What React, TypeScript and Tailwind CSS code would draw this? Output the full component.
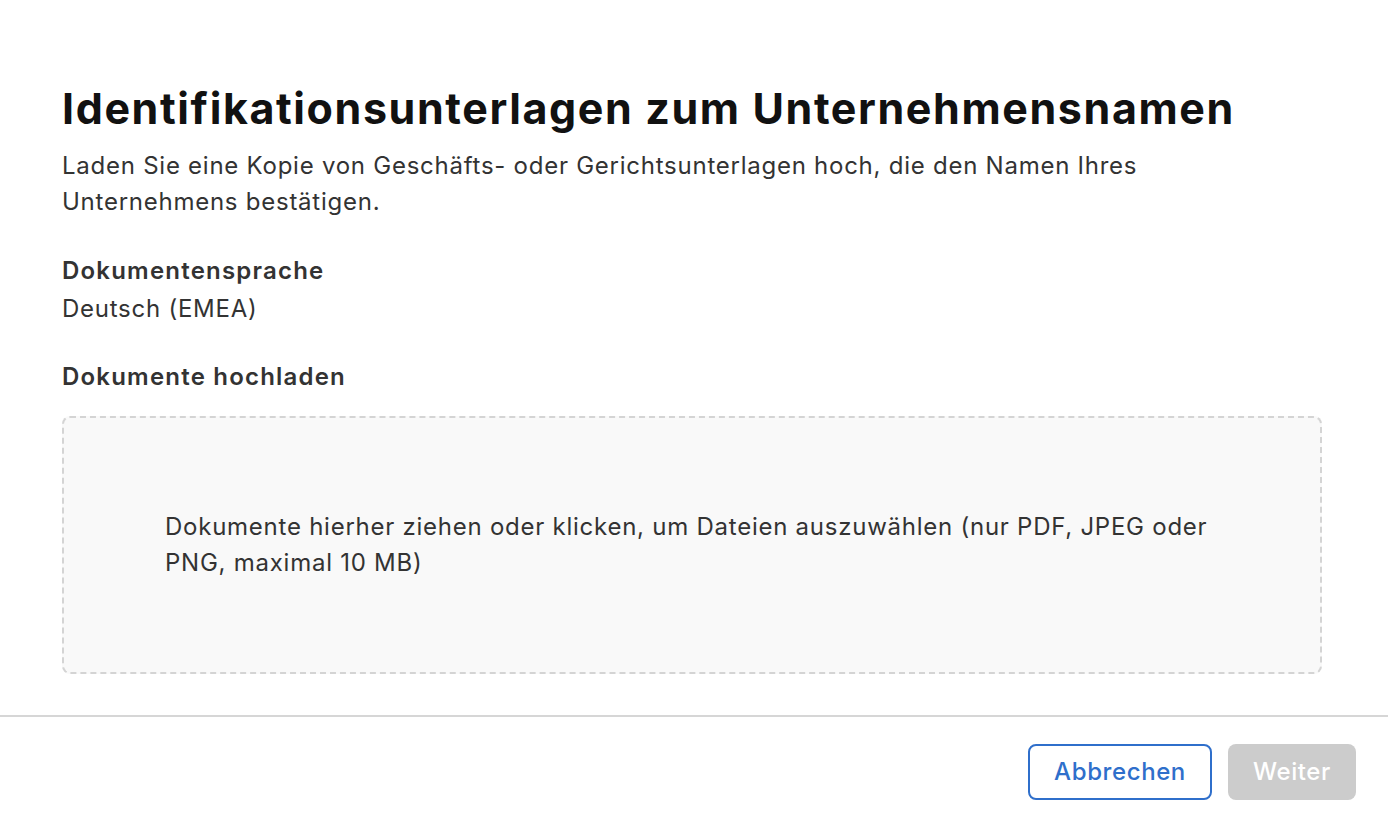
export default function App() {
  return (
    <div className="min-h-screen bg-white font-['Inter',sans-serif] text-[#333333]">
      {/* Content */}
      <div className="pl-[62px] pr-[66px] pt-[83px]">
        <h1 className="text-[43px] font-bold leading-[50px] tracking-[1.6px] text-[#111111]">
          Identifikationsunterlagen zum Unternehmensnamen
        </h1>
        <p className="mt-[15px] text-[24px] leading-[36px] tracking-[0.75px] max-w-[1100px]">
          Laden Sie eine Kopie von Geschäfts- oder Gerichtsunterlagen hoch, die den Namen Ihres
          Unternehmens bestätigen.
        </p>

        <div className="mt-[33px]">
          <div className="text-[24px] font-semibold leading-[36px] tracking-[1.2px]">Dokumentensprache</div>
          <div className="mt-[2px] text-[24px] leading-[36px] tracking-[0.75px]">Deutsch (EMEA)</div>
        </div>

        <div className="mt-[32px] text-[24px] font-semibold leading-[36px] tracking-[1.2px]">Dokumente hochladen</div>

        {/* Dropzone */}
        <div className="mt-[21px] h-[258px] rounded-lg border-2 border-dashed border-[#d4d4d4] bg-[#f9f9f9] flex items-center px-[101px] cursor-pointer">
          <p className="text-[24px] leading-[36px] tracking-[0.75px]">
            Dokumente hierher ziehen oder klicken, um Dateien auszuwählen (nur PDF, JPEG oder PNG,
            maximal 10 MB)
          </p>
        </div>
      </div>

      {/* Footer */}
      <div className="mt-[41px] border-t-2 border-[#d6d6d6] flex justify-end gap-4 pr-[32px] pt-[27px] pb-[23px]">
        <button className="h-[56px] w-[184px] rounded-lg border-2 border-[#2f6fcb] text-[24px] font-medium tracking-[0.6px] text-[#2f6fcb] bg-white">
          Abbrechen
        </button>
        <button className="h-[56px] w-[128px] rounded-lg bg-[#cccccc] text-[24px] font-medium tracking-[0.6px] text-white" disabled>
          Weiter
        </button>
      </div>
    </div>
  );
}
